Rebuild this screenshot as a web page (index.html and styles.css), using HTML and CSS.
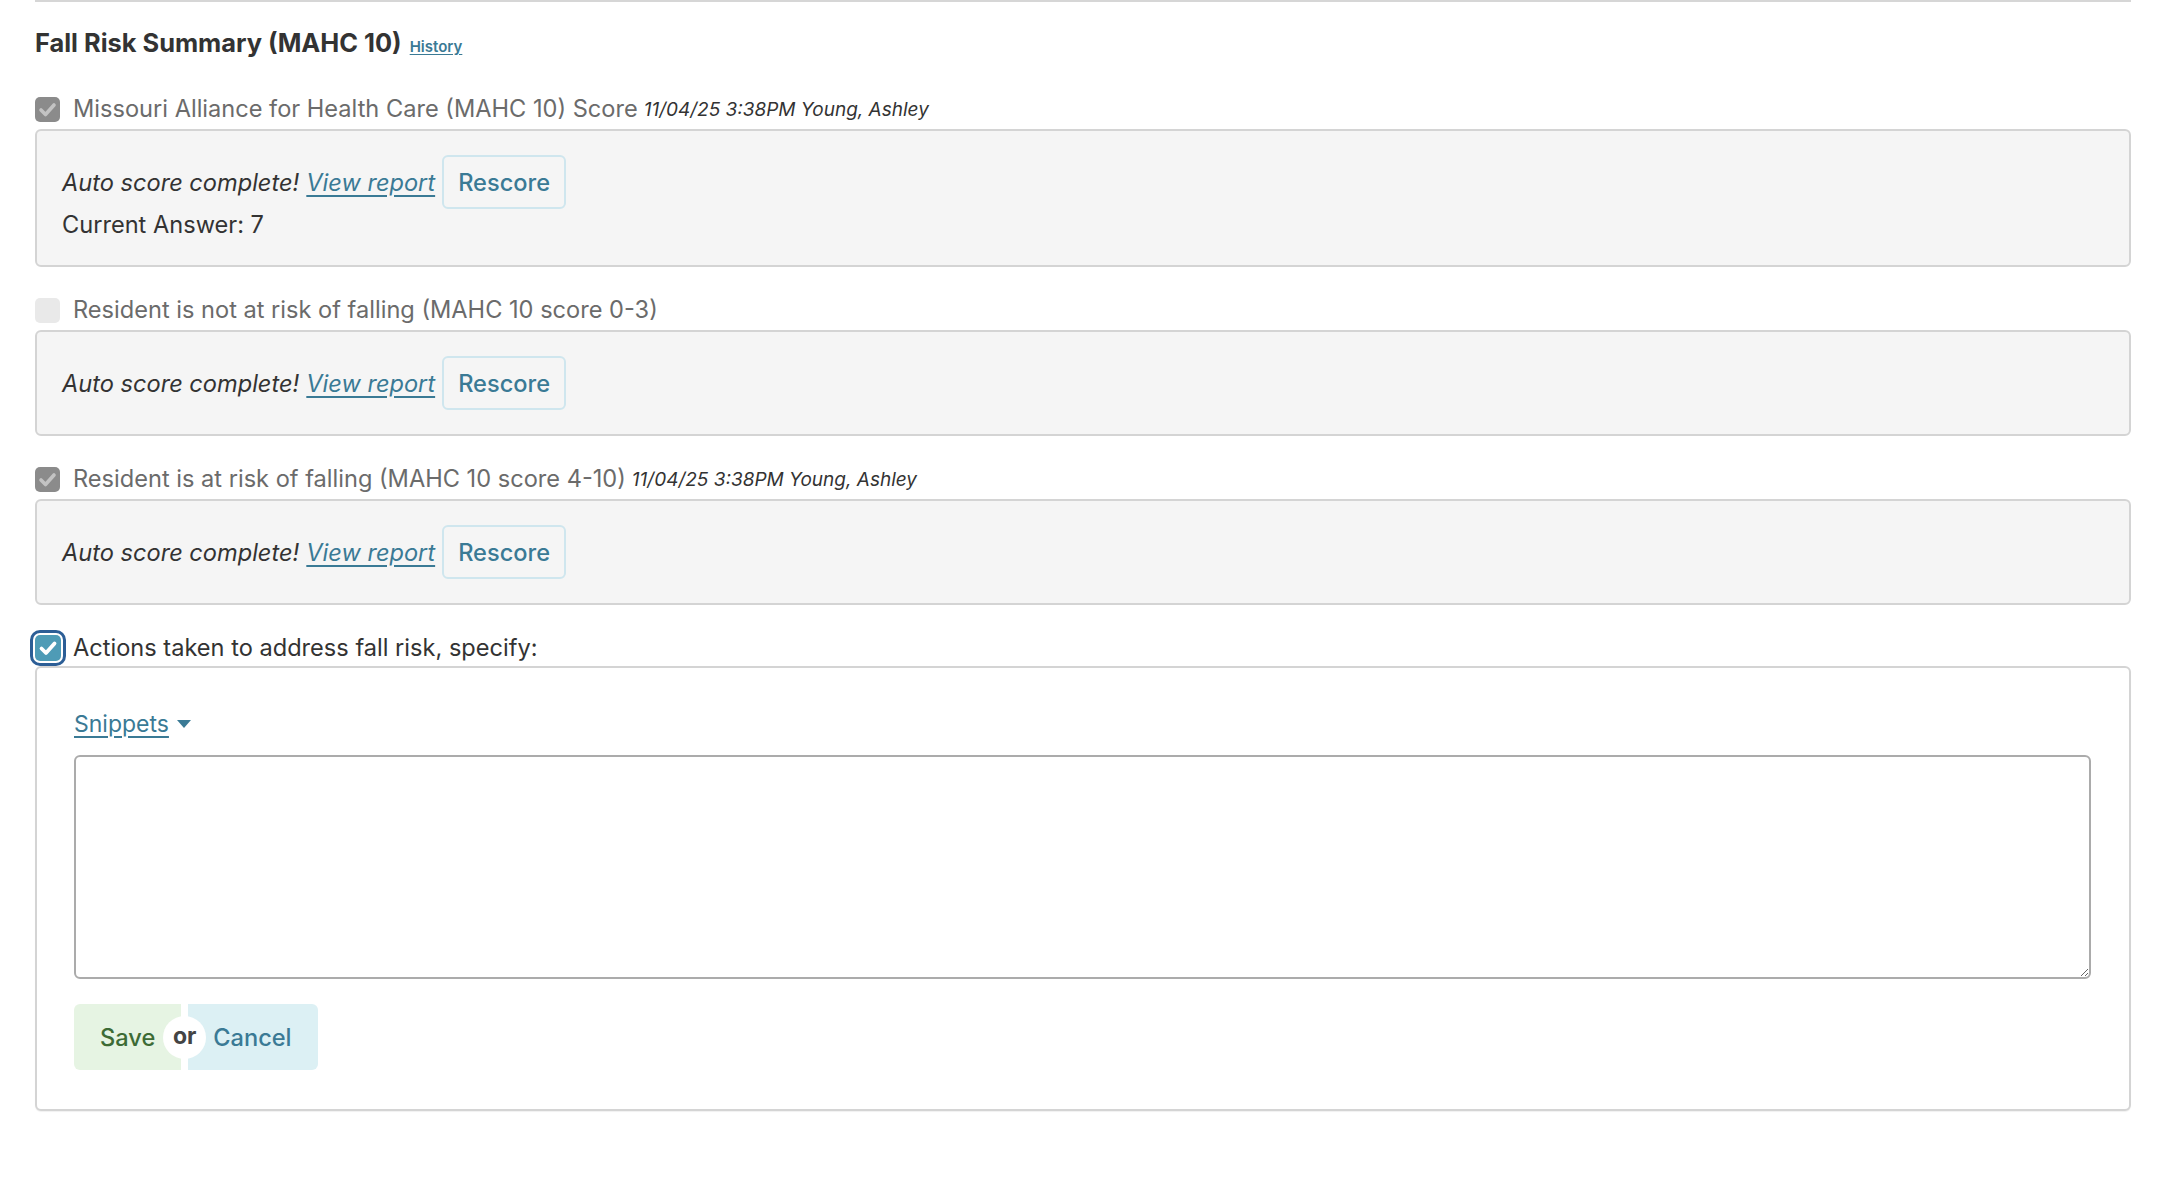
FILE: index.html
```html
<!DOCTYPE html>
<html lang="en">
<head>
<meta charset="utf-8">
<title>Fall Risk Summary (MAHC 10)</title>
<link rel="stylesheet" href="styles.css">
</head>
<body>
<div class="page">
  <div class="topline"></div>
  <h2 class="title">Fall Risk Summary (MAHC 10) <a href="#" class="history">History</a></h2>

  <div class="item">
    <div class="label-row">
      <span class="cb cb-disabled-checked">
        <svg viewBox="0 0 25 25" width="25" height="25"><polyline points="6,13 10.5,17.5 19,8" fill="none" stroke="#c3c3c3" stroke-width="3.6" stroke-linecap="round" stroke-linejoin="round"/></svg>
      </span>
      <span class="label disabled">Missouri Alliance for Health Care (MAHC 10) Score</span>
      <span class="meta">11/04/25 3:38PM Young, Ashley</span>
    </div>
    <div class="box">
      <div class="score-line">
        <span class="auto">Auto score complete!</span>
        <a href="#" class="report">View report</a>
        <button class="rescore">Rescore</button>
      </div>
      <div class="answer">Current Answer: 7</div>
    </div>
  </div>

  <div class="item">
    <div class="label-row">
      <span class="cb cb-disabled"></span>
      <span class="label disabled">Resident is not at risk of falling (MAHC 10 score 0-3)</span>
    </div>
    <div class="box">
      <div class="score-line">
        <span class="auto">Auto score complete!</span>
        <a href="#" class="report">View report</a>
        <button class="rescore">Rescore</button>
      </div>
    </div>
  </div>

  <div class="item">
    <div class="label-row">
      <span class="cb cb-disabled-checked">
        <svg viewBox="0 0 25 25" width="25" height="25"><polyline points="6,13 10.5,17.5 19,8" fill="none" stroke="#c3c3c3" stroke-width="3.6" stroke-linecap="round" stroke-linejoin="round"/></svg>
      </span>
      <span class="label disabled">Resident is at risk of falling (MAHC 10 score 4-10)</span>
      <span class="meta">11/04/25 3:38PM Young, Ashley</span>
    </div>
    <div class="box">
      <div class="score-line">
        <span class="auto">Auto score complete!</span>
        <a href="#" class="report">View report</a>
        <button class="rescore">Rescore</button>
      </div>
    </div>
  </div>

  <div class="item item-last">
    <div class="label-row">
      <span class="cb cb-active">
        <svg viewBox="0 0 26 26" width="26" height="26"><polyline points="6.5,13.5 11,18 19.5,8.5" fill="none" stroke="#ffffff" stroke-width="3.8" stroke-linecap="round" stroke-linejoin="round"/></svg>
      </span>
      <span class="label">Actions taken to address fall risk, specify:</span>
    </div>
    <div class="box box-white">
      <a href="#" class="snippets">Snippets</a><span class="caret"></span>
      <textarea class="notes"></textarea>
      <div class="actions">
        <button class="btn-save">Save</button>
        <span class="or">or</span>
        <button class="btn-cancel">Cancel</button>
      </div>
    </div>
  </div>
</div>
</body>
</html>
```

FILE: styles.css
```css
* { box-sizing: border-box; }
html, body { margin: 0; padding: 0; background: #ffffff; }
body {
  font-family: Inter, "Noto Sans", "Liberation Sans", sans-serif;
  color: #333333;
}
.page {
  padding: 0 35px;
}
.topline {
  height: 2px;
  background: #d6d6d6;
}
.title {
  margin: 26px 0 31px 0;
  font-size: 25.4px;
  line-height: 30px;
  font-weight: 700;
  color: #333333;
}
.history {
  font-size: 15px;
  font-weight: 600;
  color: #3a7a95;
  text-decoration: underline;
  text-underline-offset: 2px;
  margin-left: 2px;
}
.item {
  margin-bottom: 27px;
}
.label-row {
  display: flex;
  align-items: center;
  height: 32px;
  margin-bottom: 4px;
}
.item-last .label-row {
  margin-bottom: 2px;
}
.cb {
  width: 25px;
  height: 25px;
  border-radius: 5px;
  display: flex;
  align-items: center;
  justify-content: center;
  flex: none;
  margin-right: 13px;
}
.cb svg { display: block; }
.cb-disabled-checked { background: #8b8b8b; }
.cb-disabled { background: #e9e9e9; }
.cb-active {
  width: 26px;
  height: 26px;
  background: #4e9bb6;
  outline: 3px solid #2c5e96;
  outline-offset: 2px;
  border-radius: 5px;
  margin-right: 12px;
}
.label {
  font-size: 23.6px;
  line-height: 32px;
}
.label.disabled { color: #6b6b6b; }
.meta {
  font-size: 19px;
  font-style: italic;
  color: #333333;
  margin-left: 6px;
}
.box {
  background: #f5f5f5;
  border: 2px solid #d4d4d4;
  border-radius: 6px;
  padding: 24px 24px 24px 25px;
}
.score-line {
  display: flex;
  align-items: center;
  height: 54px;
}
.auto {
  font-size: 23.6px;
  font-style: italic;
  color: #333333;
}
.report {
  font-size: 23.6px;
  font-style: italic;
  color: #3a7a95;
  margin-left: 7px;
  text-decoration: underline;
  text-decoration-thickness: 2px;
  text-underline-offset: 4px;
}
.rescore {
  margin-left: 7px;
  height: 54px;
  padding: 0 14px;
  border: 2px solid #cfe6ee;
  border-radius: 6px;
  background: #f5f5f5;
  font-family: inherit;
  font-size: 23.6px;
  font-weight: 500;
  color: #3a7a95;
}
.answer {
  font-size: 23.6px;
  line-height: 32px;
  color: #333333;
}
.box-white {
  background: #ffffff;
  padding: 40px 38px 39px 37px;
  box-shadow: 0 1px 1px rgba(0, 0, 0, 0.06);
}
.snippets {
  font-size: 23px;
  line-height: 32px;
  color: #3a7a95;
  text-decoration: underline;
  text-decoration-thickness: 2px;
  text-underline-offset: 4px;
}
.caret {
  display: inline-block;
  width: 0;
  height: 0;
  border-left: 7px solid transparent;
  border-right: 7px solid transparent;
  border-top: 8px solid #3a7a95;
  margin-left: 8px;
  vertical-align: 4px;
}
.notes {
  display: block;
  width: 100%;
  height: 224px;
  margin-top: 15px;
  border: 2px solid #ababab;
  border-radius: 6px;
  background: #ffffff;
  resize: vertical;
  font-family: inherit;
  font-size: 22px;
}
.actions {
  display: flex;
  align-items: center;
  margin-top: 25px;
}
.btn-save, .btn-cancel {
  height: 66px;
  border: none;
  font-family: inherit;
  font-size: 23.6px;
  font-weight: 500;
}
.btn-save {
  background: #e6f4e3;
  color: #3d6b35;
  padding: 0 26px;
  border-radius: 6px 0 0 6px;
}
.btn-cancel {
  background: #dcf0f4;
  color: #3a7a95;
  padding: 0 26px 0 25px;
  border-radius: 0 6px 6px 0;
}
.or {
  position: relative;
  z-index: 1;
  width: 43px;
  height: 43px;
  margin: 0 -18px;
  border-radius: 50%;
  background: #ffffff;
  display: flex;
  align-items: center;
  justify-content: center;
  font-size: 23px;
  font-weight: 700;
  color: #444444;
  padding-bottom: 3px;
}
```
